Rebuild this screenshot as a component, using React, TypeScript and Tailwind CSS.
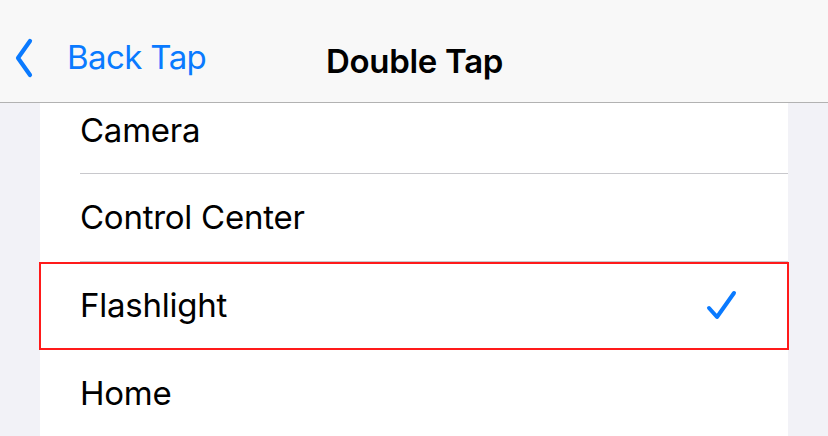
const rows = [
  { label: "Camera", first: true },
  { label: "Control Center" },
  { label: "Flashlight", checked: true },
  { label: "Home" },
];

function Chevron() {
  return (
    <svg width="20" height="40" viewBox="0 0 20 40" fill="none">
      <path d="M16 3 L4 20 L16 37" stroke="#0a7aff" strokeWidth="4.2" strokeLinecap="round" strokeLinejoin="round" />
    </svg>
  );
}

function Check() {
  return (
    <svg width="32" height="32" viewBox="0 0 32 32" fill="none">
      <path d="M3 18 L11 27 L28 3" stroke="#0a7aff" strokeWidth="4" strokeLinecap="round" strokeLinejoin="round" />
    </svg>
  );
}

export default function App() {
  return (
    <div className="w-[828px] h-[436px] overflow-hidden bg-[#f2f2f7] flex flex-col" style={{ fontFamily: "Inter, 'Noto Sans', sans-serif" }}>
      {/* Nav bar */}
      <header className="h-[103px] shrink-0 bg-[#f8f8f8] border-b border-[#b2b2b2] relative flex items-center">
        <div className="flex items-center pl-[14px] pt-[14px] text-[#0a7aff]">
          <Chevron />
          <span className="ml-[33px] text-[33px] tracking-[-0.6px]">Back Tap</span>
        </div>
        <div className="absolute left-[326px] top-[37px] text-[33px] font-semibold text-black tracking-[-0.3px]">Double Tap</div>
      </header>

      {/* List */}
      <div className="flex-1 px-[40px]">
        <div className="bg-white">
          {rows.map((r, i) => (
            <div key={r.label} className="relative pl-[40px]">
              <div
                className={`flex items-center justify-between pr-[50px] ${r.first ? "h-[71px] pb-[14px]" : "h-[88px]"} ${i < rows.length - 1 ? "border-b border-[#c8c8cc]" : ""}`}
              >
                <span className="text-[33px] text-black tracking-[-0.25px]">{r.label}</span>
                {r.checked && <Check />}
              </div>
              {r.checked && (
                <div className="absolute -left-px top-0 -right-px h-[88px] border-2 border-[#ff1a1a] pointer-events-none" />
              )}
            </div>
          ))}
        </div>
      </div>
    </div>
  );
}
